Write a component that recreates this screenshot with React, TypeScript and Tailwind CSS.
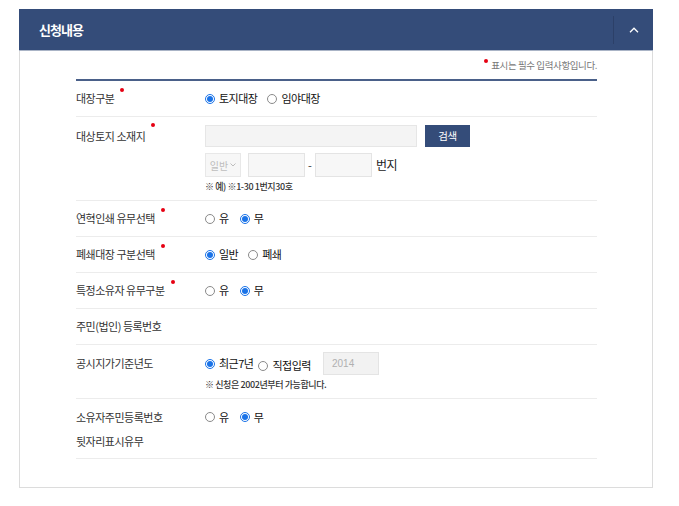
import { ReactNode } from 'react';

const FONT = { fontFamily: '"Noto Sans CJK KR", "Noto Sans", sans-serif' };

const Req = () => (
  <span className="inline-block w-[4px] h-[4px] rounded-full bg-[#e60012] ml-[6px] align-top relative top-[-2px]" />
);

const Radio = ({ label, checked }: { label: string; checked?: boolean }) => (
  <span className="inline-flex items-center gap-[4px]">
    {checked ? (
      <span className="w-[10px] h-[10px] rounded-full border border-[#1a73e8] bg-white flex items-center justify-center">
        <span className="w-[6px] h-[6px] rounded-full bg-[#1a73e8]" />
      </span>
    ) : (
      <span className="w-[10px] h-[10px] rounded-full border border-[#8a8a8a] bg-white" />
    )}
    <span className="text-[11px] tracking-[-0.5px] text-[#111]">{label}</span>
  </span>
);

type RowProps = {
  label: ReactNode;
  required?: boolean;
  className?: string;
  labelClass?: string;
  children?: ReactNode;
};

const Row = ({ label, required, className = '', labelClass = '', children }: RowProps) => (
  <div className={`flex border-b border-[#ececec] ${className}`}>
    <div className={`w-[129px] shrink-0 text-[11px] tracking-[-0.5px] text-[#333] ${labelClass}`}>
      {label}
      {required && <Req />}
    </div>
    <div className="flex-1 min-w-0">{children}</div>
  </div>
);

const Chevron = () => (
  <svg width="10" height="6" viewBox="0 0 10 6" fill="none">
    <path d="M1 5.2 L5 1.2 L9 5.2" stroke="white" strokeWidth="1.3" />
  </svg>
);

export default function App() {
  return (
    <div className="min-h-[506px] bg-white pt-[9px] pl-[19px] pr-[27px]" style={FONT}>
      <div className="w-[634px]">
        <div className="h-[42px] bg-[#344c79] flex items-center border-b border-[#aab4c6]">
          <h2 className="flex-1 pl-[20px] text-white text-[13px] font-bold tracking-[-1px]">신청내용</h2>
          <div className="w-[40px] h-[28px] border-l border-[#2c4068] flex items-center justify-center">
            <Chevron />
          </div>
        </div>
        <div className="border-x border-b border-[#dcdcdc] pl-[56px] pr-[55px] pb-[28px]">
          <div className="h-[28px] flex items-center justify-end text-[9.5px] tracking-[-0.4px] text-[#777]">
            <span className="inline-block w-[4px] h-[4px] rounded-full bg-[#e60012] mr-[3px] relative top-[-4px]" />
            표시는 필수 입력사항입니다.
          </div>
          <div className="border-t-2 border-[#4a6089]">
            <Row label="대장구분" required className="h-[36px] items-center">
              <div className="flex items-center gap-[10px]">
                <Radio label="토지대장" checked />
                <Radio label="임야대장" />
              </div>
            </Row>
            <Row label="대상토지 소재지" required className="h-[84px] pt-[8px]" labelClass="leading-[22px]">
              <div className="flex items-center gap-[8px]">
                <div className="w-[212px] h-[22px] bg-[#f4f4f4] border border-[#e6e6e6]" />
                <button className="w-[45px] h-[22px] bg-[#344c79] text-white text-[10.5px] tracking-[-0.3px]">
                  검색
                </button>
              </div>
              <div className="flex items-center mt-[6px] h-[24px]">
                <div className="w-[36px] h-[24px] bg-[#f7f7f7] border border-[#e8e8e8] flex items-center justify-center gap-[2px] text-[10px] text-[#bdbdbd]">
                  일반
                  <svg width="6" height="4" viewBox="0 0 6 4" fill="none">
                    <path d="M0.5 0.5 L3 3 L5.5 0.5" stroke="#bdbdbd" strokeWidth="1" />
                  </svg>
                </div>
                <div className="w-[57px] h-[24px] bg-[#f7f7f7] border border-[#e4e4e4] ml-[7px]" />
                <span className="w-[10px] text-center text-[11px] text-[#333]">-</span>
                <div className="w-[57px] h-[24px] bg-[#f7f7f7] border border-[#e4e4e4]" />
                <span className="ml-[4px] text-[12px] tracking-[-0.5px] text-[#222]">번지</span>
              </div>
              <p className="mt-[3px] text-[9px] font-medium tracking-[-0.4px] text-[#333]">※ 예) ※1-30 1번지30호</p>
            </Row>
            <Row label="연혁인쇄 유무선택" required className="h-[36px] items-center">
              <div className="flex items-center gap-[11px]">
                <Radio label="유" />
                <Radio label="무" checked />
              </div>
            </Row>
            <Row label="폐쇄대장 구분선택" required className="h-[36px] items-center">
              <div className="flex items-center gap-[10px]">
                <Radio label="일반" checked />
                <Radio label="폐쇄" />
              </div>
            </Row>
            <Row label="특정소유자 유무구분" required className="h-[36px] items-center">
              <div className="flex items-center gap-[11px]">
                <Radio label="유" />
                <Radio label="무" checked />
              </div>
            </Row>
            <Row label="주민(법인) 등록번호" className="h-[36px] items-center" />
            <Row label="공시지가기준년도" className="h-[54px] pt-[7px]" labelClass="leading-[23px]">
              <div className="flex items-center h-[23px]">
                <Radio label="최근7년" checked />
                <span className="ml-[5px]">
                  <Radio label="직접입력" />
                </span>
                <div className="ml-[12px] w-[56px] h-[23px] bg-[#f2f2f2] border border-[#e4e4e4] flex items-center pl-[8px] text-[10px] text-[#b0b0b0]" style={{ fontFamily: '"Liberation Sans", Arial, sans-serif' }}>
                  2014
                </div>
              </div>
              <p className="mt-[3px] text-[9px] font-medium tracking-[-0.4px] text-[#333]">※ 신청은 2002년부터 가능합니다.</p>
            </Row>
            <Row
              label={
                <>
                  소유자주민등록번호
                  <br />
                  뒷자리표시유무
                </>
              }
              className="h-[60px] pt-[6px]"
              labelClass="leading-[24px]"
            >
              <div className="flex items-center h-[24px] gap-[11px]">
                <Radio label="유" />
                <Radio label="무" checked />
              </div>
            </Row>
          </div>
        </div>
      </div>
    </div>
  );
}
